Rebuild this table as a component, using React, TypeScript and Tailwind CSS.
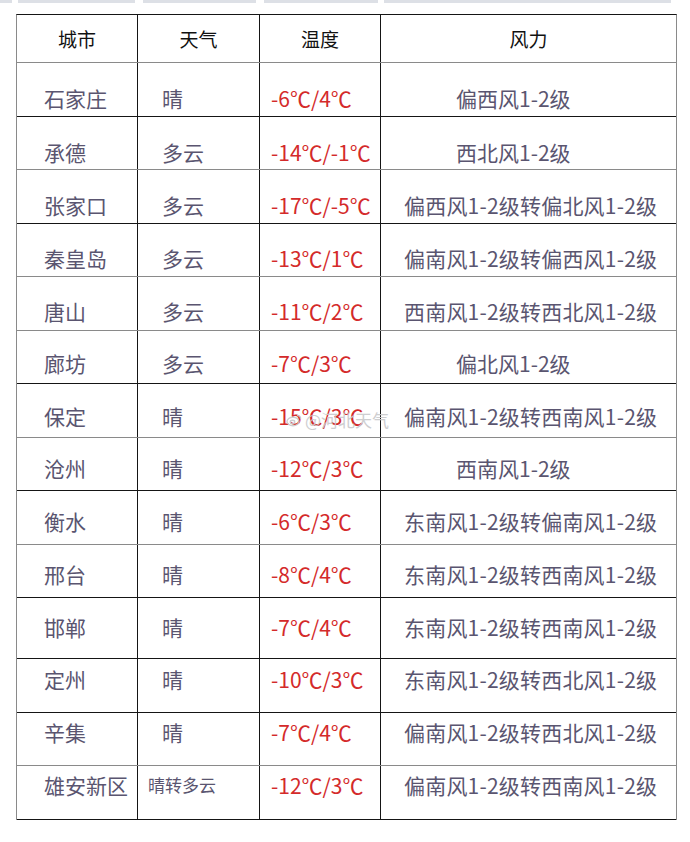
import React from "react";

type Row = {
  city: string;
  weather: string;
  temp: string;
  wind: string;
  h: string;
  pt: string;
  line: string;
};

const rows: Row[] = [
  { city: "石家庄", weather: "晴", temp: "-6℃/4℃", wind: "偏西风1-2级", h: "h-[54px]", pt: "pt-[21px]", line: "border-b-[#151515]" },
  { city: "承德", weather: "多云", temp: "-14℃/-1℃", wind: "西北风1-2级", h: "h-[53px]", pt: "pt-[21px]", line: "border-b-[#8a8a8a]" },
  { city: "张家口", weather: "多云", temp: "-17℃/-5℃", wind: "偏西风1-2级转偏北风1-2级", h: "h-[54px]", pt: "pt-[21px]", line: "border-b-[#151515]" },
  { city: "秦皇岛", weather: "多云", temp: "-13℃/1℃", wind: "偏南风1-2级转偏西风1-2级", h: "h-[53px]", pt: "pt-[20px]", line: "border-b-[#8a8a8a]" },
  { city: "唐山", weather: "多云", temp: "-11℃/2℃", wind: "西南风1-2级转西北风1-2级", h: "h-[54px]", pt: "pt-[20px]", line: "border-b-[#8a8a8a]" },
  { city: "廊坊", weather: "多云", temp: "-7℃/3℃", wind: "偏北风1-2级", h: "h-[53px]", pt: "pt-[18px]", line: "border-b-[#151515]" },
  { city: "保定", weather: "晴", temp: "-15℃/3℃", wind: "偏南风1-2级转西南风1-2级", h: "h-[54px]", pt: "pt-[18px]", line: "border-b-[#8a8a8a]" },
  { city: "沧州", weather: "晴", temp: "-12℃/3℃", wind: "西南风1-2级", h: "h-[53px]", pt: "pt-[16px]", line: "border-b-[#151515]" },
  { city: "衡水", weather: "晴", temp: "-6℃/3℃", wind: "东南风1-2级转偏南风1-2级", h: "h-[54px]", pt: "pt-[16px]", line: "border-b-[#8a8a8a]" },
  { city: "邢台", weather: "晴", temp: "-8℃/4℃", wind: "东南风1-2级转西南风1-2级", h: "h-[53px]", pt: "pt-[15px]", line: "border-b-[#151515]" },
  { city: "邯郸", weather: "晴", temp: "-7℃/4℃", wind: "东南风1-2级转西南风1-2级", h: "h-[61px]", pt: "pt-[15px]", line: "border-b-[#151515]" },
  { city: "定州", weather: "晴", temp: "-10℃/3℃", wind: "东南风1-2级转西北风1-2级", h: "h-[54px]", pt: "pt-[6px]", line: "border-b-[#151515]" },
  { city: "辛集", weather: "晴", temp: "-7℃/4℃", wind: "偏南风1-2级转西北风1-2级", h: "h-[53px]", pt: "pt-[5px]", line: "border-b-[#8a8a8a]" },
  { city: "雄安新区", weather: "晴转多云", temp: "-12℃/3℃", wind: "偏南风1-2级转西南风1-2级", h: "h-[54px]", pt: "pt-[5px]", line: "border-b-[#151515]" },
];

const font = { fontFamily: '"Noto Sans CJK SC", "Noto Sans", sans-serif' };

export default function App() {
  return (
    <div className="relative w-[690px] h-[842px] bg-white overflow-hidden" style={font}>
      {/* top strip remnants */}
      <div className="flex h-[3px]">
        <div className="w-[12px] bg-[#dde0e6]" />
        <div className="ml-[6px] w-[117px] bg-[#dde0e6]" />
        <div className="ml-[8px] w-[113px] bg-[#dde0e6]" />
        <div className="ml-[8px] w-[114px] bg-[#dde0e6]" />
        <div className="ml-[6px] w-[287px] bg-[#dde0e6]" />
      </div>

      <div className="ml-[16px] mt-[11px] w-[661px] border-t border-t-[#151515] border-l border-l-[#8a8a8a] border-r border-r-[#8a8a8a]">
        {/* header */}
        <div className="grid grid-cols-[121px_122px_121px_1fr] h-[48px] border-b border-b-[#8a8a8a] text-[19px] text-[#111] leading-[28px]">
          <div className="border-r border-r-[#151515] flex items-center justify-center">城市</div>
          <div className="border-r border-r-[#151515] flex items-center justify-center">天气</div>
          <div className="border-r border-r-[#151515] flex items-center justify-center">温度</div>
          <div className="flex items-center justify-center">风力</div>
        </div>
        {rows.map((r) => {
          const long = r.wind.length > 8;
          const multi = r.weather.length > 2;
          return (
            <div
              key={r.city}
              className={`grid grid-cols-[121px_122px_121px_1fr] border-b ${r.h} ${r.line} text-[21px] leading-[28px] text-[#5a5570]`}
            >
              <div className={`border-r border-r-[#151515] pl-[27px] whitespace-nowrap ${r.pt}`}>{r.city}</div>
              <div className={`border-r border-r-[#151515] whitespace-nowrap ${r.pt} ${multi ? "pl-[10px] text-[17px]" : "pl-[24px]"}`}>
                {r.weather}
              </div>
              <div className={`border-r border-r-[#151515] pl-[11px] whitespace-nowrap text-[#d42a2a] ${r.pt}`}>{r.temp}</div>
              <div className={`whitespace-nowrap ${r.pt} ${long ? "pl-[23px] tracking-[0.2px]" : "pl-[75px]"}`}>{r.wind}</div>
            </div>
          );
        })}
      </div>

      {/* watermark */}
      <div className="absolute left-[286px] top-[409px] flex items-center gap-[3px] text-[17px] leading-[22px] text-[#c9c9cc] opacity-90">
        <svg width="16" height="14" viewBox="0 0 16 14" fill="none" stroke="#c9c9cc" strokeWidth="1.4">
          <ellipse cx="7" cy="8.5" rx="6" ry="4.3" />
          <ellipse cx="6.5" cy="9" rx="2.2" ry="1.7" />
          <path d="M11 2.5 A3 3 0 0 1 14.5 6" />
        </svg>
        <span>@河北天气</span>
      </div>
    </div>
  );
}
